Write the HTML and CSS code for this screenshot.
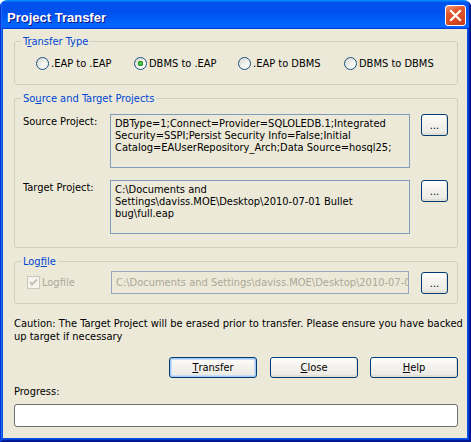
FILE: index.html
```html
<!DOCTYPE html>
<html>
<head>
<meta charset="utf-8">
<title>Project Transfer</title>
<link rel="stylesheet" href="styles.css">
</head>
<body>
<div class="window">
  <div class="titlebar">
    <span class="title">Project Transfer</span>
    <span class="close" aria-label="Close">
      <svg width="13" height="13" viewBox="0 0 13 13"><path d="M2 2 L11 11 M11 2 L2 11" stroke="#fff" stroke-width="2.2" stroke-linecap="square" fill="none"/></svg>
    </span>
  </div>
  <div class="frame">
    <div class="client">
      <div class="group">
        <div class="group-title">T<u>r</u>ansfer Type</div>
        <div class="radios">
          <label class="opt"><span class="radio"></span>.EAP to .EAP</label>
          <label class="opt"><span class="radio on"></span>DBMS to .EAP</label>
          <label class="opt"><span class="radio"></span>.EAP to DBMS</label>
          <label class="opt"><span class="radio"></span>DBMS to DBMS</label>
        </div>
      </div>

      <div class="group">
        <div class="group-title">So<u>u</u>rce and Target Projects</div>
        <div class="proj-rows">
          <div class="field-label">Source Project:</div>
          <div class="textbox multi">DBType=1;Connect=Provider=SQLOLEDB.1;Integrated<br>Security=SSPI;Persist Security Info=False;Initial<br>Catalog=EAUserRepository_Arch;Data Source=hosql25;</div>
          <div class="btn dots">...</div>
          <div class="field-label">Target Project:</div>
          <div class="textbox multi">C:\Documents and<br>Settings\daviss.MOE\Desktop\2010-07-01 Bullet<br>bug\full.eap</div>
          <div class="btn dots">...</div>
        </div>
      </div>

      <div class="group">
        <div class="group-title">Log<u>f</u>ile</div>
        <div class="log-row">
          <label class="check-cell"><span class="checkbox"><svg width="11" height="11" viewBox="0 0 11 11"><path d="M2 5 L4 7.5 L9 2.5" stroke="#C4C2B5" stroke-width="2" fill="none"/></svg></span><span class="disabled-text">Logfile</span></label>
          <div class="textbox single disabled">C:\Documents and Settings\daviss.MOE\Desktop\2010-07-0</div>
          <div class="btn dots log-dots">...</div>
        </div>
      </div>

      <p class="caution">Caution: The Target Project will be erased prior to transfer. Please ensure you have backed<br>up target if necessary</p>

      <div class="actions">
        <div class="btn action default"><u>T</u>ransfer</div>
        <div class="btn action"><u>C</u>lose</div>
        <div class="btn action"><u>H</u>elp</div>
      </div>

      <div class="progress-label">Progress:</div>
      <div class="progress"></div>
    </div>
  </div>
</div>
</body>
</html>
```

FILE: styles.css
```css
* { box-sizing: border-box; }
html, body { margin: 0; padding: 0; background: #ffffff; }
body { width: 471px; height: 442px; overflow: hidden; }

.window {
  width: 471px;
  height: 442px;
  display: flex;
  flex-direction: column;
  border-radius: 7px 7px 0 0;
  overflow: hidden;
  font-family: "DejaVu Sans Condensed", "DejaVu Sans", "Liberation Sans", sans-serif;
  font-size: 11px;
  line-height: 13px;
  color: #000;
}

.titlebar {
  height: 29px;
  flex: none;
  display: flex;
  align-items: center;
  padding: 0 5px 0 7px;
  background: linear-gradient(180deg, #0997ff 0, #0053ee 8%, #0050ee 40%, #0066ff 88%, #0066ff 93%, #005bff 95%, #003dd7 96%, #003dd7 100%);
  box-shadow: inset 1px 0 #0831d9, inset -1px 0 #00138c, inset 2px 0 #166aee, inset -2px 0 #001ea0;
}
.title {
  font-family: "Liberation Sans", Arial, sans-serif;
  font-weight: bold;
  font-size: 13px;
  line-height: 15px;
  margin-top: 5px;
  color: #fff;
  text-shadow: 1px 1px 0 #0f1089;
}
.close {
  margin-left: auto;
  margin-top: 2px;
  width: 21px;
  height: 21px;
  border: 1px solid #fff;
  border-radius: 3px;
  display: flex;
  align-items: center;
  justify-content: center;
  background: linear-gradient(160deg, #f09a7c 0%, #e2582f 30%, #d84a22 70%, #c23a14 100%);
}

.frame {
  flex: 1;
  padding: 0 4px 4px 3px;
  background: #0855dd;
  box-shadow: inset 1px 0 #0831d9, inset -1px -1px #00138c, inset 2px 0 #166aee, inset -2px -2px #001ea0, inset -3px -3px #003bda;
}
.client {
  height: 409px;
  background: #ece9d8;
  padding: 0 9px 0 11px;
  display: flex;
  flex-direction: column;
}

.group {
  border: 1px solid #d0d0bf;
  border-radius: 3px;
  margin-top: 13px;
}
.group:first-child { margin-top: 12px; }
.group-title {
  width: max-content;
  height: 13px;
  margin: -7px 0 0 6px;
  padding: 0 2px;
  background: #ece9d8;
  color: #0046d5;
}

.radios {
  display: grid;
  grid-template-columns: 98px 104px 106px auto;
  margin-top: 9px;
  padding: 0 0 14px 21px;
}
.opt { display: flex; align-items: center; gap: 2px; white-space: nowrap; }
.radio {
  width: 13px;
  height: 13px;
  flex: none;
  border: 1px solid #1c5180;
  border-radius: 50%;
  background: linear-gradient(135deg, #d6d6cf 0%, #f3f3ef 55%, #ffffff 100%);
}
.radio.on {
  background: radial-gradient(circle at 50% 50%, #6fe06b 0, #2fa92b 1.6px, #218a1e 2.6px, rgba(33,138,30,0) 3px), linear-gradient(135deg, #d6d6cf 0%, #f3f3ef 55%, #ffffff 100%);
}

.proj-rows {
  display: grid;
  grid-template-columns: 76px 300px 27px;
  column-gap: 11px;
  row-gap: 12px;
  margin-top: 9px;
  padding: 0 0 13px 8px;
  align-items: start;
}
.field-label { padding-top: 1px; white-space: nowrap; }

.textbox {
  border: 1px solid #7f9db9;
  background: #ece9d8;
  white-space: nowrap;
  overflow: hidden;
}
.textbox.multi { height: 54px; padding: 3px 4px; line-height: 12px; }
.textbox.single { height: 23px; padding: 4px 4px; }
.textbox.disabled { color: #aca899; border-color: #93a7bf; }

.btn {
  border: 1px solid #003c74;
  border-radius: 3px;
  background: linear-gradient(180deg, #ffffff 0%, #f4f3ee 40%, #ecebe6 86%, #d6d0c5 100%);
  box-shadow: inset -1px -1px #e3ded3;
  display: flex;
  align-items: center;
  justify-content: center;
  white-space: nowrap;
}
.dots { width: 27px; height: 22px; padding-top: 1px; }
.log-dots { margin-top: 1px; }

.log-row {
  display: grid;
  grid-template-columns: 72px 298px 27px;
  column-gap: 12px;
  margin-top: 3px;
  padding: 0 0 9px 12px;
  align-items: start;
}
.check-cell { display: flex; align-items: center; gap: 2px; height: 23px; }
.checkbox {
  width: 13px;
  height: 13px;
  border: 1px solid #cac8bb;
  background: #f5f4ef;
  display: flex;
  align-items: center;
  justify-content: center;
}
.disabled-text { color: #aca899; }

.caution { margin: 13px 0 0 0; white-space: nowrap; }

.actions {
  display: flex;
  justify-content: flex-end;
  gap: 12px;
  margin-top: 14px;
}
.action { width: 88px; height: 21px; }
.action.default {
  margin-right: 1px;
  box-shadow: inset 0 0 0 1px #a8c8f4, inset 0 0 0 2px #c6dcf8;
}

.progress-label { margin-top: 7px; }
.progress {
  margin-top: 6px;
  height: 23px;
  border: 1px solid #6f6f6f;
  border-radius: 3px;
  background: #ffffff;
}
```
